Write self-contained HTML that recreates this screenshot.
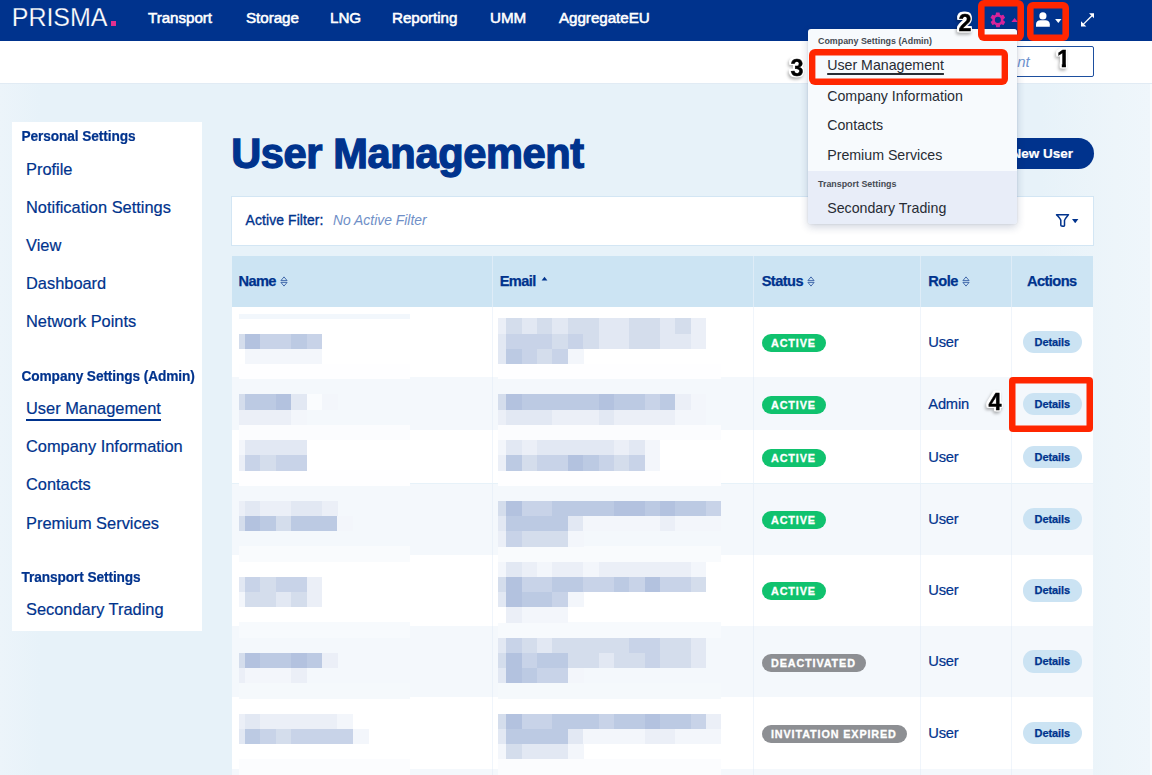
<!DOCTYPE html>
<html lang="en">
<head>
<meta charset="utf-8">
<title>PRISMA - User Management</title>
<style>
*{box-sizing:border-box;margin:0;padding:0}
html,body{width:1152px;height:775px;overflow:hidden}
body{font-family:"Liberation Sans",Arial,sans-serif;color:#00338d;background:#e8f2f9;position:relative}
.bg{position:absolute;left:0;top:83px;width:1152px;height:692px;background:linear-gradient(90deg,#ecf4fa 0,#e7f2f9 40px,#e7f2f9 1040px,#edf5fa 1115px,#eff6fb 1150.5px,#f8fbfd 1150.5px)}
/* ---------- top navigation ---------- */
.nav{position:absolute;left:0;top:0;width:1152px;height:41.6px;background:#00338d;color:#fff}
.logo{position:absolute;left:11.800px;top:2.3px;font-size:25px;line-height:30px;letter-spacing:-.05px;color:#fff;-webkit-text-stroke:.25px #00338d}
.logo-dot{position:absolute;left:110.5px;top:20.7px;width:5.8px;height:5.4px;background:#e2318f}
.nav a{position:absolute;top:9.3px;font-size:15.2px;line-height:18px;font-weight:normal;color:#fff;text-decoration:none;white-space:nowrap;letter-spacing:-.05px;-webkit-text-stroke:.55px #fff}
.ico{position:absolute}
/* ---------- sub bar ---------- */
.subbar{position:absolute;left:0;top:41px;width:1152px;height:43.2px;background:#fff;border-bottom:1px solid #e1ebf4}
.acct{position:absolute;left:960px;top:45.5px;width:134px;height:31.5px;border:1.2px solid #1d4f9f;border-radius:2px;background:#fff}
.acct i{position:absolute;left:56.2px;top:6px;font-size:15px;line-height:18px;color:#6f93cf}
/* ---------- side bar ---------- */
.side{position:absolute;left:12px;top:122px;width:190px;height:509px;background:#fff}
.side h4{position:absolute;left:9.5px;margin-top:.6px;font-size:13.7px;transform:scale(1,1.11);transform-origin:0 50%;-webkit-text-stroke:.2px #00338d;line-height:16px;font-weight:bold;color:#00338d;white-space:nowrap;letter-spacing:-.1px}
.side a{position:absolute;left:14px;-webkit-text-stroke:.2px #00338d;font-size:16.4px;line-height:20px;color:#00338d;text-decoration:none;white-space:nowrap}
.side a.on{border-bottom:2px solid #00338d;padding-bottom:1px}
/* ---------- main ---------- */
h1{position:absolute;left:231.2px;top:128.9px;font-size:41.6px;line-height:50px;font-weight:bold;color:#00338d;white-space:nowrap;letter-spacing:-.38px;-webkit-text-stroke:1.3px #00338d}
.newuser{position:absolute;left:968px;top:137.5px;width:126px;height:31px;border-radius:16px;background:#00338d;color:#fff;font-size:13.5px;font-weight:bold;line-height:31px;-webkit-text-stroke:.2px #fff;text-align:right;padding-right:21px;white-space:nowrap}
.filter{position:absolute;left:231px;top:196px;width:863px;height:50px;background:#fff;border:1px solid #d3e6f4}
.filter b{position:absolute;left:13.5px;top:15.4px;font-size:13.9px;line-height:16px;font-weight:normal;color:#00338d;white-space:nowrap;letter-spacing:.12px;-webkit-text-stroke:.35px #00338d}
.filter i{position:absolute;left:101px;top:15.4px;font-size:13.9px;line-height:16px;color:#6f8fc7;white-space:nowrap}
/* table */
.thead{position:absolute;left:232px;top:256px;width:861px;height:50.6px;background:#cce4f3}
.th{position:absolute;top:0;height:100%;border-left:1.3px solid #deecf7;font-size:14.6px;font-weight:bold;line-height:51.2px;color:#00338d;padding-left:8px;white-space:nowrap;letter-spacing:-.55px;-webkit-text-stroke:.25px #00338d}
.th:first-child{border-left:0}
.sort{display:inline-block;vertical-align:middle;margin-left:4px;margin-top:-2px}
.row{position:absolute;left:232px;width:861px;background:#fff}
.row.alt{background:#f4f8fc}
.cell{position:absolute;top:0;height:100%;border-left:1.3px solid #f0f5fb}
.row.alt .cell{border-left-color:#eaf1f9}
.cell:first-child{border-left:0}
.c-name{left:0;width:259.7px}.c-email{left:259.7px;width:261.7px}.c-status{left:521.4px;width:166.9px}.c-role{left:688.3px;width:90.7px}.c-act{left:779px;width:82px}
.c-role span{position:absolute;left:7px;top:50%;margin-top:-10.1px;font-size:14.7px;letter-spacing:-.2px;line-height:20px;color:#00338d;-webkit-text-stroke:.2px #00338d}
.badge{position:absolute;left:7.2px;top:50%;margin-top:-8px;height:18px;border-radius:9px;padding:0 10.1px 0 9.4px;font-size:10.8px;line-height:18.5px;font-weight:bold;letter-spacing:.88px;color:#fff;white-space:nowrap;-webkit-text-stroke:.3px #fff}
.badge.green{background:#10c26e}
.badge.grey{background:#8d8f93}
.details{position:absolute;left:10.8px;top:50%;margin-top:-11.2px;width:59px;height:22.5px;border-radius:11px;background:#cbe3f3;color:#00338d;font-size:11px;letter-spacing:-.1px;line-height:22px;font-weight:bold;text-align:center;-webkit-text-stroke:.25px #00338d}
.mosaic{position:absolute;left:0;top:0;pointer-events:none}
/* ---------- dropdown ---------- */
.tab{position:absolute;left:985px;top:28.5px;width:32px;height:14px;background:#f7fafd;border-radius:4px 4px 0 0}
.dd{position:absolute;left:808px;top:29px;width:209px;height:195px;background:#f7fafd;border-radius:3px;box-shadow:0 3px 9px rgba(20,40,90,.2),0 0 2px rgba(20,40,90,.12);overflow:hidden}
.dd .sec2{position:absolute;left:0;top:142px;width:209px;height:54px;background:#e8edf8}
.dd h5{position:absolute;left:10px;font-size:8.9px;line-height:10px;font-weight:bold;color:#454a52;white-space:nowrap;margin-top:.5px}
.dd a{position:absolute;left:19.2px;font-size:14.2px;line-height:18px;color:#272c34;text-decoration:none;white-space:nowrap}
.dd a.on{text-decoration:underline;text-decoration-thickness:1.8px;text-underline-offset:2.8px}
/* ---------- annotations ---------- */
.red{position:absolute;box-shadow:inset 0 0 0 6.6px #ff2600;border-radius:6px}
.num{position:absolute;font-size:23.4px;line-height:26px;font-weight:bold;color:#000;-webkit-text-stroke:.4px #000;filter:drop-shadow(1.3px 0 0 #fff) drop-shadow(-1.3px 0 0 #fff) drop-shadow(0 1.3px 0 #fff) drop-shadow(0 -1.3px 0 #fff) drop-shadow(-.5px 2px 1.5px rgba(0,0,0,.3))}
.num .one{display:inline-block;clip-path:polygon(0 0,100% 0,100% 17.7px,9.05px 17.7px,9.05px 100%,4.950px 100%,4.950px 17.7px,0 17.7px)}
</style>
</head>
<body>
<div class="bg"></div>

<!-- top navigation -->
<div class="nav">
  <div class="logo">PRISMA</div><div class="logo-dot"></div>
  <a style="left:148px">Transport</a>
  <a style="left:246px">Storage</a>
  <a style="left:330px">LNG</a>
  <a style="left:392px">Reporting</a>
  <a style="left:490px">UMM</a>
  <a style="left:559px">AggregateEU</a>
  <!-- gear -->
  <svg class="ico" style="left:989.3px;top:10.800px" width="17.750" height="17.750" viewBox="0 0 24 24"><path fill="#d6249a" d="M19.4 13a7.6 7.6 0 0 0 0-2l2.1-1.6a.5.5 0 0 0 .1-.7l-2-3.4a.5.5 0 0 0-.6-.2l-2.5 1a7.300 7.300 0 0 0-1.700-1l-.4-2.600a.5.5 0 0 0-.5-.4h-4a.5.5 0 0 0-.5.4l-.4 2.600a7.300 7.300 0 0 0-1.700 1l-2.500-1a.5.5 0 0 0-.6.200l-2 3.400a.5.5 0 0 0 .1.700L4.600 11a7.600 7.600 0 0 0 0 2l-2.100 1.600a.5.500 0 0 0-.1.700l2 3.400c.1.200.4.300.6.200l2.500-1c.5.400 1.100.700 1.700 1l.4 2.600c0 .200.200.400.500.400h4c.2 0 .500-.200.500-.400l.4-2.600a7.300 7.300 0 0 0 1.700-1l2.500 1c.2.100.500 0 .6-.200l2-3.400a.5.5 0 0 0-.1-.700L19.400 13zM12 16.100a4.100 4.100 0 1 1 0-8.200 4.100 4.100 0 0 1 0 8.200z"/></svg>
  <svg class="ico" style="left:1010.700px;top:18.300px" width="7.200" height="4.100" viewBox="0 0 8 5"><path fill="#d6249a" d="M0 5h8L4 0z"/></svg>
  <!-- user -->
  <svg class="ico" style="left:1036px;top:12.3px" width="13.800" height="14.800" viewBox="0 0 15 16"><circle cx="7.500" cy="4.200" r="3.900" fill="#fff"/><path fill="#fff" d="M0 16v-2.600C0 10.600 2.200 9 4.600 9h5.800c2.400 0 4.600 1.600 4.600 4.400V16z"/></svg>
  <svg class="ico" style="left:1055px;top:18.7px" width="6.600" height="4" viewBox="0 0 8 5"><path fill="#fff" d="M0 0h8L4 5z"/></svg>
  <!-- expand -->
  <svg class="ico" style="left:1081px;top:13.300px" width="13.400" height="13.800" viewBox="0 0 15 15"><path fill="#fff" d="M9 0h6v6zM6 15H0V9z"/><path stroke="#fff" stroke-width="1.500" d="M2.500 12.500L12.500 2.500"/></svg>
</div>

<!-- sub bar -->
<div class="subbar"></div>
<div class="acct"><i>nt</i></div>

<!-- side bar -->
<div class="side">
  <h4 style="top:6px">Personal Settings</h4>
  <a style="top:37px">Profile</a>
  <a style="top:75px">Notification Settings</a>
  <a style="top:113px">View</a>
  <a style="top:151px">Dashboard</a>
  <a style="top:189px">Network Points</a>
  <h4 style="top:246px">Company Settings (Admin)</h4>
  <a class="on" style="top:276px">User Management</a>
  <a style="top:314px">Company Information</a>
  <a style="top:352px">Contacts</a>
  <a style="top:391px">Premium Services</a>
  <h4 style="top:447px">Transport Settings</h4>
  <a style="top:477px">Secondary Trading</a>
</div>

<!-- main -->
<h1>User Management</h1>
<div class="newuser">New User</div>
<div class="filter"><b>Active Filter:</b><i>No Active Filter</i>
  <svg class="ico" style="left:822.5px;top:16.300px" width="15" height="15" viewBox="0 0 15 15"><path fill="none" stroke="#00338d" stroke-width="1.500" stroke-linejoin="round" d="M1.500 1.700h12c-.9 1.400-3.700 4-4 5.600v5.300c0 1.200-3.700.8-3.700-.4V7.300c-.3-1.600-3.100-4.200-4.300-5.600z"/></svg>
  <svg class="ico" style="left:840.300px;top:21.800px" width="6.400" height="4.300" viewBox="0 0 6 4"><path fill="#00338d" d="M0 0h6L3 4z"/></svg>
</div>

<div class="thead">
  <div class="th c-name" style="padding-left:6.4px">Name<svg class="sort" width="8" height="11" viewBox="0 0 8 11"><path fill="none" stroke="#2d56a0" stroke-width=".85" stroke-linejoin="round" d="M.9 4.600L4 .900l3.100 3.700zM.9 6.400L4 10.100l3.100-3.700z"/></svg></div>
  <div class="th c-email" style="padding-left:7px">Email<svg class="sort" width="7" height="9" viewBox="0 0 7 9" style="margin-left:5px;margin-top:-6px"><path fill="#00338d" d="M.6 5.400L3.500 1.800 6.400 5.400z"/></svg></div>
  <div class="th c-status" style="padding-left:7.3px">Status<svg class="sort" width="8" height="11" viewBox="0 0 8 11"><path fill="none" stroke="#2d56a0" stroke-width=".85" stroke-linejoin="round" d="M.9 4.600L4 .900l3.100 3.700zM.9 6.400L4 10.100l3.100-3.700z"/></svg></div>
  <div class="th c-role" style="padding-left:7px">Role<svg class="sort" width="8" height="11" viewBox="0 0 8 11"><path fill="none" stroke="#2d56a0" stroke-width=".85" stroke-linejoin="round" d="M.9 4.600L4 .900l3.100 3.700zM.9 6.400L4 10.100l3.100-3.700z"/></svg></div>
  <div class="th c-act" style="padding-left:0;padding-right:1.5px;text-align:center">Actions</div>
</div>
<div class="row" style="top:306.6px;height:70.8px"><div class="cell c-name"></div><div class="cell c-email"></div><div class="cell c-status"><span class="badge green">ACTIVE</span></div><div class="cell c-role"><span>User</span></div><div class="cell c-act"><span class="details">Details</span></div></div>
<div class="row alt" style="top:377.4px;height:52.9px"><div class="cell c-name"></div><div class="cell c-email"></div><div class="cell c-status"><span class="badge green">ACTIVE</span></div><div class="cell c-role"><span>Admin</span></div><div class="cell c-act"><span class="details">Details</span></div></div>
<div class="row" style="top:430.3px;height:53.2px"><div class="cell c-name"></div><div class="cell c-email"></div><div class="cell c-status"><span class="badge green">ACTIVE</span></div><div class="cell c-role"><span>User</span></div><div class="cell c-act"><span class="details">Details</span></div></div>
<div class="row alt" style="top:483.5px;height:71px"><div class="cell c-name"></div><div class="cell c-email"></div><div class="cell c-status"><span class="badge green">ACTIVE</span></div><div class="cell c-role"><span>User</span></div><div class="cell c-act"><span class="details">Details</span></div></div>
<div class="row" style="top:554.5px;height:71.5px"><div class="cell c-name"></div><div class="cell c-email"></div><div class="cell c-status"><span class="badge green">ACTIVE</span></div><div class="cell c-role"><span>User</span></div><div class="cell c-act"><span class="details">Details</span></div></div>
<div class="row alt" style="top:626px;height:71px"><div class="cell c-name"></div><div class="cell c-email"></div><div class="cell c-status"><span class="badge grey">DEACTIVATED</span></div><div class="cell c-role"><span>User</span></div><div class="cell c-act"><span class="details">Details</span></div></div>
<div class="row" style="top:697px;height:71.5px"><div class="cell c-name"></div><div class="cell c-email"></div><div class="cell c-status"><span class="badge grey">INVITATION EXPIRED</span></div><div class="cell c-role"><span>User</span></div><div class="cell c-act"><span class="details">Details</span></div></div>
<div class="row alt" style="top:768.5px;height:40px"><div class="cell c-name"></div><div class="cell c-email"></div><div class="cell c-status"></div><div class="cell c-role"></div><div class="cell c-act"></div></div>

<svg class="mosaic" width="1152" height="775" viewBox="0 0 1152 775" shape-rendering="crispEdges">
<rect x="239.3" y="363.9" width="170.7" height="15.5" fill="#fefeff"/>
<rect x="498.3" y="363.9" width="222.5" height="15.5" fill="#fefeff"/>
<rect x="239.3" y="424.7" width="170.7" height="15.5" fill="#fbfcfe"/>
<rect x="498.3" y="424.7" width="222.5" height="15.5" fill="#fbfcfe"/>
<rect x="239.3" y="470.3" width="170.7" height="15.5" fill="#fefeff"/>
<rect x="498.3" y="470.3" width="222.5" height="15.5" fill="#fefeff"/>
<rect x="239.3" y="546.3" width="170.7" height="15.5" fill="#f9fbfd"/>
<rect x="498.3" y="546.3" width="222.5" height="15.5" fill="#f9fbfd"/>
<rect x="239.3" y="622.3" width="170.7" height="15.5" fill="#f7fafd"/>
<rect x="498.3" y="622.3" width="222.5" height="15.5" fill="#f7fafd"/>
<rect x="239.3" y="683.1" width="170.7" height="15.5" fill="#f5f9fc"/>
<rect x="498.3" y="683.1" width="222.5" height="15.5" fill="#f5f9fc"/>
<rect x="239.3" y="759.1" width="170.7" height="15.5" fill="#fbfcfe"/>
<rect x="498.3" y="759.1" width="222.5" height="15.5" fill="#fbfcfe"/>
<rect x="239.3" y="314.2" width="170.7" height="4.3" fill="#f2f7fc"/>
<rect x="239.3" y="333.5" width="6.0" height="15.5" fill="#d4ddec"/>
<rect x="245.0" y="333.5" width="15.7" height="15.5" fill="#b3c2df"/>
<rect x="260.4" y="333.5" width="15.7" height="15.5" fill="#c8d3e8"/>
<rect x="275.8" y="333.5" width="15.7" height="15.5" fill="#c8d3e8"/>
<rect x="291.2" y="333.5" width="15.7" height="15.5" fill="#bccae3"/>
<rect x="306.6" y="333.5" width="15.7" height="15.5" fill="#c8d3e8"/>
<rect x="239.3" y="348.7" width="6.0" height="15.5" fill="#ffffff"/>
<rect x="245.0" y="348.7" width="15.7" height="15.5" fill="#f3f6fb"/>
<rect x="260.4" y="348.7" width="15.7" height="15.5" fill="#f3f6fb"/>
<rect x="275.8" y="348.7" width="15.7" height="15.5" fill="#f3f6fb"/>
<rect x="291.2" y="348.7" width="15.7" height="15.5" fill="#f3f6fb"/>
<rect x="306.6" y="348.7" width="15.7" height="15.5" fill="#f3f6fb"/>
<rect x="239.3" y="394.3" width="6.0" height="15.5" fill="#d4ddec"/>
<rect x="245.0" y="394.3" width="15.7" height="15.5" fill="#bccae3"/>
<rect x="260.4" y="394.3" width="15.7" height="15.5" fill="#bccae3"/>
<rect x="275.8" y="394.3" width="15.7" height="15.5" fill="#b3c2df"/>
<rect x="291.2" y="394.3" width="15.7" height="15.5" fill="#e2e8f3"/>
<rect x="306.6" y="394.3" width="15.7" height="15.5" fill="#fafcfe"/>
<rect x="322.0" y="394.3" width="15.7" height="15.5" fill="#f3f6fb"/>
<rect x="239.3" y="409.5" width="6.0" height="15.5" fill="#ebeff7"/>
<rect x="245.0" y="409.5" width="15.7" height="15.5" fill="#ebeff7"/>
<rect x="260.4" y="409.5" width="15.7" height="15.5" fill="#ebeff7"/>
<rect x="275.8" y="409.5" width="15.7" height="15.5" fill="#ebeff7"/>
<rect x="291.2" y="409.5" width="15.7" height="15.5" fill="#f3f6fb"/>
<rect x="239.3" y="439.9" width="6.0" height="15.5" fill="#f3f6fb"/>
<rect x="245.0" y="439.9" width="15.7" height="15.5" fill="#e2e8f3"/>
<rect x="260.4" y="439.9" width="15.7" height="15.5" fill="#e2e8f3"/>
<rect x="275.8" y="439.9" width="15.7" height="15.5" fill="#e2e8f3"/>
<rect x="291.2" y="439.9" width="15.7" height="15.5" fill="#e2e8f3"/>
<rect x="239.3" y="455.1" width="6.0" height="15.5" fill="#ebeff7"/>
<rect x="245.0" y="455.1" width="15.7" height="15.5" fill="#c8d3e8"/>
<rect x="260.4" y="455.1" width="15.7" height="15.5" fill="#d4ddec"/>
<rect x="275.8" y="455.1" width="15.7" height="15.5" fill="#c8d3e8"/>
<rect x="291.2" y="455.1" width="15.7" height="15.5" fill="#c8d3e8"/>
<rect x="239.3" y="500.7" width="6.0" height="15.5" fill="#ebeff7"/>
<rect x="245.0" y="500.7" width="15.7" height="15.5" fill="#e2e8f3"/>
<rect x="260.4" y="500.7" width="15.7" height="15.5" fill="#ebeff7"/>
<rect x="275.8" y="500.7" width="15.7" height="15.5" fill="#ebeff7"/>
<rect x="291.2" y="500.7" width="15.7" height="15.5" fill="#e2e8f3"/>
<rect x="306.6" y="500.7" width="15.7" height="15.5" fill="#e2e8f3"/>
<rect x="322.0" y="500.7" width="15.7" height="15.5" fill="#ebeff7"/>
<rect x="239.3" y="515.9" width="6.0" height="15.5" fill="#d4ddec"/>
<rect x="245.0" y="515.9" width="15.7" height="15.5" fill="#b3c2df"/>
<rect x="260.4" y="515.9" width="15.7" height="15.5" fill="#bccae3"/>
<rect x="275.8" y="515.9" width="15.7" height="15.5" fill="#d4ddec"/>
<rect x="291.2" y="515.9" width="15.7" height="15.5" fill="#bccae3"/>
<rect x="306.6" y="515.9" width="15.7" height="15.5" fill="#bccae3"/>
<rect x="322.0" y="515.9" width="15.7" height="15.5" fill="#bccae3"/>
<rect x="337.4" y="515.9" width="15.7" height="15.5" fill="#f3f6fb"/>
<rect x="239.3" y="576.7" width="6.0" height="15.5" fill="#e2e8f3"/>
<rect x="245.0" y="576.7" width="15.7" height="15.5" fill="#c8d3e8"/>
<rect x="260.4" y="576.7" width="15.7" height="15.5" fill="#d4ddec"/>
<rect x="275.8" y="576.7" width="15.7" height="15.5" fill="#c8d3e8"/>
<rect x="291.2" y="576.7" width="15.7" height="15.5" fill="#c8d3e8"/>
<rect x="306.6" y="576.7" width="15.7" height="15.5" fill="#ebeff7"/>
<rect x="239.3" y="591.9" width="6.0" height="15.5" fill="#f3f6fb"/>
<rect x="245.0" y="591.9" width="15.7" height="15.5" fill="#d4ddec"/>
<rect x="260.4" y="591.9" width="15.7" height="15.5" fill="#d4ddec"/>
<rect x="275.8" y="591.9" width="15.7" height="15.5" fill="#e2e8f3"/>
<rect x="291.2" y="591.9" width="15.7" height="15.5" fill="#d4ddec"/>
<rect x="306.6" y="591.9" width="15.7" height="15.5" fill="#ebeff7"/>
<rect x="239.3" y="652.7" width="6.0" height="15.5" fill="#d4ddec"/>
<rect x="245.0" y="652.7" width="15.7" height="15.5" fill="#b3c2df"/>
<rect x="260.4" y="652.7" width="15.7" height="15.5" fill="#bccae3"/>
<rect x="275.8" y="652.7" width="15.7" height="15.5" fill="#bccae3"/>
<rect x="291.2" y="652.7" width="15.7" height="15.5" fill="#b3c2df"/>
<rect x="306.6" y="652.7" width="15.7" height="15.5" fill="#bccae3"/>
<rect x="322.0" y="652.7" width="15.7" height="15.5" fill="#ebeff7"/>
<rect x="239.3" y="667.9" width="6.0" height="15.5" fill="#ebeff7"/>
<rect x="245.0" y="667.9" width="15.7" height="15.5" fill="#f3f6fb"/>
<rect x="260.4" y="667.9" width="15.7" height="15.5" fill="#f3f6fb"/>
<rect x="275.8" y="667.9" width="15.7" height="15.5" fill="#f3f6fb"/>
<rect x="291.2" y="667.9" width="15.7" height="15.5" fill="#ebeff7"/>
<rect x="239.3" y="713.5" width="6.0" height="15.5" fill="#ebeff7"/>
<rect x="245.0" y="713.5" width="15.7" height="15.5" fill="#e2e8f3"/>
<rect x="260.4" y="713.5" width="15.7" height="15.5" fill="#ebeff7"/>
<rect x="275.8" y="713.5" width="15.7" height="15.5" fill="#ebeff7"/>
<rect x="291.2" y="713.5" width="15.7" height="15.5" fill="#ebeff7"/>
<rect x="306.6" y="713.5" width="15.7" height="15.5" fill="#ebeff7"/>
<rect x="322.0" y="713.5" width="15.7" height="15.5" fill="#ebeff7"/>
<rect x="337.4" y="713.5" width="15.7" height="15.5" fill="#f3f6fb"/>
<rect x="239.3" y="728.7" width="6.0" height="15.5" fill="#e2e8f3"/>
<rect x="245.0" y="728.7" width="15.7" height="15.5" fill="#bccae3"/>
<rect x="260.4" y="728.7" width="15.7" height="15.5" fill="#c8d3e8"/>
<rect x="275.8" y="728.7" width="15.7" height="15.5" fill="#d4ddec"/>
<rect x="291.2" y="728.7" width="15.7" height="15.5" fill="#c8d3e8"/>
<rect x="306.6" y="728.7" width="15.7" height="15.5" fill="#c8d3e8"/>
<rect x="322.0" y="728.7" width="15.7" height="15.5" fill="#c8d3e8"/>
<rect x="337.4" y="728.7" width="15.7" height="15.5" fill="#c8d3e8"/>
<rect x="352.8" y="728.7" width="15.7" height="15.5" fill="#f3f6fb"/>
<rect x="498.3" y="318.3" width="8.3" height="15.5" fill="#ebeff7"/>
<rect x="506.3" y="318.3" width="15.7" height="15.5" fill="#d4ddec"/>
<rect x="521.7" y="318.3" width="15.7" height="15.5" fill="#e2e8f3"/>
<rect x="537.0" y="318.3" width="15.7" height="15.5" fill="#d4ddec"/>
<rect x="552.4" y="318.3" width="15.7" height="15.5" fill="#e2e8f3"/>
<rect x="567.8" y="318.3" width="15.7" height="15.5" fill="#d4ddec"/>
<rect x="583.1" y="318.3" width="15.7" height="15.5" fill="#d4ddec"/>
<rect x="598.5" y="318.3" width="15.7" height="15.5" fill="#e2e8f3"/>
<rect x="613.9" y="318.3" width="15.7" height="15.5" fill="#e2e8f3"/>
<rect x="629.3" y="318.3" width="15.7" height="15.5" fill="#d4ddec"/>
<rect x="644.6" y="318.3" width="15.7" height="15.5" fill="#d4ddec"/>
<rect x="660.0" y="318.3" width="15.7" height="15.5" fill="#e2e8f3"/>
<rect x="675.4" y="318.3" width="15.7" height="15.5" fill="#d4ddec"/>
<rect x="690.7" y="318.3" width="15.7" height="15.5" fill="#ebeff7"/>
<rect x="498.3" y="333.5" width="8.3" height="15.5" fill="#e2e8f3"/>
<rect x="506.3" y="333.5" width="15.7" height="15.5" fill="#c8d3e8"/>
<rect x="521.7" y="333.5" width="15.7" height="15.5" fill="#c8d3e8"/>
<rect x="537.0" y="333.5" width="15.7" height="15.5" fill="#c8d3e8"/>
<rect x="552.4" y="333.5" width="15.7" height="15.5" fill="#d4ddec"/>
<rect x="567.8" y="333.5" width="15.7" height="15.5" fill="#c8d3e8"/>
<rect x="583.1" y="333.5" width="15.7" height="15.5" fill="#d4ddec"/>
<rect x="598.5" y="333.5" width="15.7" height="15.5" fill="#e2e8f3"/>
<rect x="613.9" y="333.5" width="15.7" height="15.5" fill="#e2e8f3"/>
<rect x="629.3" y="333.5" width="15.7" height="15.5" fill="#d4ddec"/>
<rect x="644.6" y="333.5" width="15.7" height="15.5" fill="#d4ddec"/>
<rect x="660.0" y="333.5" width="15.7" height="15.5" fill="#e2e8f3"/>
<rect x="675.4" y="333.5" width="15.7" height="15.5" fill="#e2e8f3"/>
<rect x="690.7" y="333.5" width="15.7" height="15.5" fill="#ebeff7"/>
<rect x="498.3" y="348.7" width="8.3" height="15.5" fill="#e2e8f3"/>
<rect x="506.3" y="348.7" width="15.7" height="15.5" fill="#bccae3"/>
<rect x="521.7" y="348.7" width="15.7" height="15.5" fill="#c8d3e8"/>
<rect x="537.0" y="348.7" width="15.7" height="15.5" fill="#d4ddec"/>
<rect x="552.4" y="348.7" width="15.7" height="15.5" fill="#c8d3e8"/>
<rect x="567.8" y="348.7" width="15.7" height="15.5" fill="#f3f6fb"/>
<rect x="498.3" y="394.3" width="8.3" height="15.5" fill="#d4ddec"/>
<rect x="506.3" y="394.3" width="15.7" height="15.5" fill="#b3c2df"/>
<rect x="521.7" y="394.3" width="15.7" height="15.5" fill="#bccae3"/>
<rect x="537.0" y="394.3" width="15.7" height="15.5" fill="#bccae3"/>
<rect x="552.4" y="394.3" width="15.7" height="15.5" fill="#bccae3"/>
<rect x="567.8" y="394.3" width="15.7" height="15.5" fill="#bccae3"/>
<rect x="583.1" y="394.3" width="15.7" height="15.5" fill="#bccae3"/>
<rect x="598.5" y="394.3" width="15.7" height="15.5" fill="#b3c2df"/>
<rect x="613.9" y="394.3" width="15.7" height="15.5" fill="#bccae3"/>
<rect x="629.3" y="394.3" width="15.7" height="15.5" fill="#bccae3"/>
<rect x="644.6" y="394.3" width="15.7" height="15.5" fill="#c8d3e8"/>
<rect x="660.0" y="394.3" width="15.7" height="15.5" fill="#bccae3"/>
<rect x="675.4" y="394.3" width="15.7" height="15.5" fill="#ebeff7"/>
<rect x="690.7" y="394.3" width="15.7" height="15.5" fill="#f3f6fb"/>
<rect x="498.3" y="409.5" width="8.3" height="15.5" fill="#ebeff7"/>
<rect x="506.3" y="409.5" width="15.7" height="15.5" fill="#e2e8f3"/>
<rect x="521.7" y="409.5" width="15.7" height="15.5" fill="#e2e8f3"/>
<rect x="537.0" y="409.5" width="15.7" height="15.5" fill="#e2e8f3"/>
<rect x="552.4" y="409.5" width="15.7" height="15.5" fill="#ebeff7"/>
<rect x="567.8" y="409.5" width="15.7" height="15.5" fill="#ebeff7"/>
<rect x="583.1" y="409.5" width="15.7" height="15.5" fill="#ebeff7"/>
<rect x="598.5" y="409.5" width="15.7" height="15.5" fill="#e2e8f3"/>
<rect x="613.9" y="409.5" width="15.7" height="15.5" fill="#ebeff7"/>
<rect x="629.3" y="409.5" width="15.7" height="15.5" fill="#ebeff7"/>
<rect x="644.6" y="409.5" width="15.7" height="15.5" fill="#ebeff7"/>
<rect x="660.0" y="409.5" width="15.7" height="15.5" fill="#ebeff7"/>
<rect x="675.4" y="409.5" width="15.7" height="15.5" fill="#f3f6fb"/>
<rect x="690.7" y="409.5" width="15.7" height="15.5" fill="#f3f6fb"/>
<rect x="498.3" y="439.9" width="8.3" height="15.5" fill="#f3f6fb"/>
<rect x="506.3" y="439.9" width="15.7" height="15.5" fill="#e2e8f3"/>
<rect x="521.7" y="439.9" width="15.7" height="15.5" fill="#ebeff7"/>
<rect x="537.0" y="439.9" width="15.7" height="15.5" fill="#e2e8f3"/>
<rect x="552.4" y="439.9" width="15.7" height="15.5" fill="#e2e8f3"/>
<rect x="567.8" y="439.9" width="15.7" height="15.5" fill="#e2e8f3"/>
<rect x="583.1" y="439.9" width="15.7" height="15.5" fill="#e2e8f3"/>
<rect x="598.5" y="439.9" width="15.7" height="15.5" fill="#e2e8f3"/>
<rect x="613.9" y="439.9" width="15.7" height="15.5" fill="#ebeff7"/>
<rect x="629.3" y="439.9" width="15.7" height="15.5" fill="#e2e8f3"/>
<rect x="644.6" y="439.9" width="15.7" height="15.5" fill="#f3f6fb"/>
<rect x="498.3" y="455.1" width="8.3" height="15.5" fill="#ebeff7"/>
<rect x="506.3" y="455.1" width="15.7" height="15.5" fill="#bccae3"/>
<rect x="521.7" y="455.1" width="15.7" height="15.5" fill="#d4ddec"/>
<rect x="537.0" y="455.1" width="15.7" height="15.5" fill="#c8d3e8"/>
<rect x="552.4" y="455.1" width="15.7" height="15.5" fill="#c8d3e8"/>
<rect x="567.8" y="455.1" width="15.7" height="15.5" fill="#b3c2df"/>
<rect x="583.1" y="455.1" width="15.7" height="15.5" fill="#bccae3"/>
<rect x="598.5" y="455.1" width="15.7" height="15.5" fill="#c8d3e8"/>
<rect x="613.9" y="455.1" width="15.7" height="15.5" fill="#d4ddec"/>
<rect x="629.3" y="455.1" width="15.7" height="15.5" fill="#c8d3e8"/>
<rect x="644.6" y="455.1" width="15.7" height="15.5" fill="#f3f6fb"/>
<rect x="498.3" y="500.7" width="8.3" height="15.5" fill="#d4ddec"/>
<rect x="506.3" y="500.7" width="15.7" height="15.5" fill="#b3c2df"/>
<rect x="521.7" y="500.7" width="15.7" height="15.5" fill="#c8d3e8"/>
<rect x="537.0" y="500.7" width="15.7" height="15.5" fill="#c8d3e8"/>
<rect x="552.4" y="500.7" width="15.7" height="15.5" fill="#bccae3"/>
<rect x="567.8" y="500.7" width="15.7" height="15.5" fill="#bccae3"/>
<rect x="583.1" y="500.7" width="15.7" height="15.5" fill="#bccae3"/>
<rect x="598.5" y="500.7" width="15.7" height="15.5" fill="#bccae3"/>
<rect x="613.9" y="500.7" width="15.7" height="15.5" fill="#b3c2df"/>
<rect x="629.3" y="500.7" width="15.7" height="15.5" fill="#b3c2df"/>
<rect x="644.6" y="500.7" width="15.7" height="15.5" fill="#bccae3"/>
<rect x="660.0" y="500.7" width="15.7" height="15.5" fill="#b3c2df"/>
<rect x="675.4" y="500.7" width="15.7" height="15.5" fill="#bccae3"/>
<rect x="690.7" y="500.7" width="15.7" height="15.5" fill="#bccae3"/>
<rect x="706.1" y="500.7" width="15.2" height="15.5" fill="#c8d3e8"/>
<rect x="498.3" y="515.9" width="8.3" height="15.5" fill="#e2e8f3"/>
<rect x="506.3" y="515.9" width="15.7" height="15.5" fill="#bccae3"/>
<rect x="521.7" y="515.9" width="15.7" height="15.5" fill="#bccae3"/>
<rect x="537.0" y="515.9" width="15.7" height="15.5" fill="#bccae3"/>
<rect x="552.4" y="515.9" width="15.7" height="15.5" fill="#bccae3"/>
<rect x="567.8" y="515.9" width="15.7" height="15.5" fill="#e2e8f3"/>
<rect x="583.1" y="515.9" width="15.7" height="15.5" fill="#f3f6fb"/>
<rect x="598.5" y="515.9" width="15.7" height="15.5" fill="#f3f6fb"/>
<rect x="613.9" y="515.9" width="15.7" height="15.5" fill="#f3f6fb"/>
<rect x="629.3" y="515.9" width="15.7" height="15.5" fill="#f3f6fb"/>
<rect x="644.6" y="515.9" width="15.7" height="15.5" fill="#f3f6fb"/>
<rect x="660.0" y="515.9" width="15.7" height="15.5" fill="#ebeff7"/>
<rect x="675.4" y="515.9" width="15.7" height="15.5" fill="#f3f6fb"/>
<rect x="690.7" y="515.9" width="15.7" height="15.5" fill="#f3f6fb"/>
<rect x="706.1" y="515.9" width="15.2" height="15.5" fill="#f3f6fb"/>
<rect x="498.3" y="531.1" width="8.3" height="15.5" fill="#ebeff7"/>
<rect x="506.3" y="531.1" width="15.7" height="15.5" fill="#c8d3e8"/>
<rect x="521.7" y="531.1" width="15.7" height="15.5" fill="#d4ddec"/>
<rect x="537.0" y="531.1" width="15.7" height="15.5" fill="#d4ddec"/>
<rect x="552.4" y="531.1" width="15.7" height="15.5" fill="#d4ddec"/>
<rect x="567.8" y="531.1" width="15.7" height="15.5" fill="#f3f6fb"/>
<rect x="498.3" y="561.5" width="8.3" height="15.5" fill="#f3f6fb"/>
<rect x="506.3" y="561.5" width="15.7" height="15.5" fill="#e2e8f3"/>
<rect x="521.7" y="561.5" width="15.7" height="15.5" fill="#ebeff7"/>
<rect x="537.0" y="561.5" width="15.7" height="15.5" fill="#f3f6fb"/>
<rect x="552.4" y="561.5" width="15.7" height="15.5" fill="#ebeff7"/>
<rect x="567.8" y="561.5" width="15.7" height="15.5" fill="#ebeff7"/>
<rect x="583.1" y="561.5" width="15.7" height="15.5" fill="#f3f6fb"/>
<rect x="598.5" y="561.5" width="15.7" height="15.5" fill="#ebeff7"/>
<rect x="613.9" y="561.5" width="15.7" height="15.5" fill="#ebeff7"/>
<rect x="629.3" y="561.5" width="15.7" height="15.5" fill="#ebeff7"/>
<rect x="644.6" y="561.5" width="15.7" height="15.5" fill="#ebeff7"/>
<rect x="660.0" y="561.5" width="15.7" height="15.5" fill="#ebeff7"/>
<rect x="675.4" y="561.5" width="15.7" height="15.5" fill="#ebeff7"/>
<rect x="690.7" y="561.5" width="15.7" height="15.5" fill="#f3f6fb"/>
<rect x="498.3" y="576.7" width="8.3" height="15.5" fill="#d4ddec"/>
<rect x="506.3" y="576.7" width="15.7" height="15.5" fill="#b3c2df"/>
<rect x="521.7" y="576.7" width="15.7" height="15.5" fill="#c8d3e8"/>
<rect x="537.0" y="576.7" width="15.7" height="15.5" fill="#c8d3e8"/>
<rect x="552.4" y="576.7" width="15.7" height="15.5" fill="#bccae3"/>
<rect x="567.8" y="576.7" width="15.7" height="15.5" fill="#bccae3"/>
<rect x="583.1" y="576.7" width="15.7" height="15.5" fill="#c8d3e8"/>
<rect x="598.5" y="576.7" width="15.7" height="15.5" fill="#c8d3e8"/>
<rect x="613.9" y="576.7" width="15.7" height="15.5" fill="#bccae3"/>
<rect x="629.3" y="576.7" width="15.7" height="15.5" fill="#c8d3e8"/>
<rect x="644.6" y="576.7" width="15.7" height="15.5" fill="#b3c2df"/>
<rect x="660.0" y="576.7" width="15.7" height="15.5" fill="#c8d3e8"/>
<rect x="675.4" y="576.7" width="15.7" height="15.5" fill="#c8d3e8"/>
<rect x="690.7" y="576.7" width="15.7" height="15.5" fill="#d4ddec"/>
<rect x="498.3" y="591.9" width="8.3" height="15.5" fill="#e2e8f3"/>
<rect x="506.3" y="591.9" width="15.7" height="15.5" fill="#b3c2df"/>
<rect x="521.7" y="591.9" width="15.7" height="15.5" fill="#bccae3"/>
<rect x="537.0" y="591.9" width="15.7" height="15.5" fill="#bccae3"/>
<rect x="552.4" y="591.9" width="15.7" height="15.5" fill="#c8d3e8"/>
<rect x="567.8" y="591.9" width="15.7" height="15.5" fill="#f3f6fb"/>
<rect x="498.3" y="607.1" width="8.3" height="15.5" fill="#ffffff"/>
<rect x="506.3" y="607.1" width="15.7" height="15.5" fill="#ebeff7"/>
<rect x="521.7" y="607.1" width="15.7" height="15.5" fill="#f3f6fb"/>
<rect x="537.0" y="607.1" width="15.7" height="15.5" fill="#f3f6fb"/>
<rect x="552.4" y="607.1" width="15.7" height="15.5" fill="#f3f6fb"/>
<rect x="498.3" y="637.5" width="8.3" height="15.5" fill="#e2e8f3"/>
<rect x="506.3" y="637.5" width="15.7" height="15.5" fill="#c8d3e8"/>
<rect x="521.7" y="637.5" width="15.7" height="15.5" fill="#d4ddec"/>
<rect x="537.0" y="637.5" width="15.7" height="15.5" fill="#e2e8f3"/>
<rect x="552.4" y="637.5" width="15.7" height="15.5" fill="#d4ddec"/>
<rect x="567.8" y="637.5" width="15.7" height="15.5" fill="#d4ddec"/>
<rect x="583.1" y="637.5" width="15.7" height="15.5" fill="#d4ddec"/>
<rect x="598.5" y="637.5" width="15.7" height="15.5" fill="#d4ddec"/>
<rect x="613.9" y="637.5" width="15.7" height="15.5" fill="#d4ddec"/>
<rect x="629.3" y="637.5" width="15.7" height="15.5" fill="#c8d3e8"/>
<rect x="644.6" y="637.5" width="15.7" height="15.5" fill="#c8d3e8"/>
<rect x="660.0" y="637.5" width="15.7" height="15.5" fill="#d4ddec"/>
<rect x="675.4" y="637.5" width="15.7" height="15.5" fill="#d4ddec"/>
<rect x="690.7" y="637.5" width="15.7" height="15.5" fill="#e2e8f3"/>
<rect x="498.3" y="652.7" width="8.3" height="15.5" fill="#d4ddec"/>
<rect x="506.3" y="652.7" width="15.7" height="15.5" fill="#b3c2df"/>
<rect x="521.7" y="652.7" width="15.7" height="15.5" fill="#c8d3e8"/>
<rect x="537.0" y="652.7" width="15.7" height="15.5" fill="#bccae3"/>
<rect x="552.4" y="652.7" width="15.7" height="15.5" fill="#bccae3"/>
<rect x="567.8" y="652.7" width="15.7" height="15.5" fill="#d4ddec"/>
<rect x="583.1" y="652.7" width="15.7" height="15.5" fill="#d4ddec"/>
<rect x="598.5" y="652.7" width="15.7" height="15.5" fill="#e2e8f3"/>
<rect x="613.9" y="652.7" width="15.7" height="15.5" fill="#d4ddec"/>
<rect x="629.3" y="652.7" width="15.7" height="15.5" fill="#d4ddec"/>
<rect x="644.6" y="652.7" width="15.7" height="15.5" fill="#c8d3e8"/>
<rect x="660.0" y="652.7" width="15.7" height="15.5" fill="#d4ddec"/>
<rect x="675.4" y="652.7" width="15.7" height="15.5" fill="#d4ddec"/>
<rect x="690.7" y="652.7" width="15.7" height="15.5" fill="#e2e8f3"/>
<rect x="498.3" y="667.9" width="8.3" height="15.5" fill="#e2e8f3"/>
<rect x="506.3" y="667.9" width="15.7" height="15.5" fill="#b3c2df"/>
<rect x="521.7" y="667.9" width="15.7" height="15.5" fill="#bccae3"/>
<rect x="537.0" y="667.9" width="15.7" height="15.5" fill="#c8d3e8"/>
<rect x="552.4" y="667.9" width="15.7" height="15.5" fill="#c8d3e8"/>
<rect x="567.8" y="667.9" width="15.7" height="15.5" fill="#f3f6fb"/>
<rect x="498.3" y="713.5" width="8.3" height="15.5" fill="#d4ddec"/>
<rect x="506.3" y="713.5" width="15.7" height="15.5" fill="#b3c2df"/>
<rect x="521.7" y="713.5" width="15.7" height="15.5" fill="#c8d3e8"/>
<rect x="537.0" y="713.5" width="15.7" height="15.5" fill="#c8d3e8"/>
<rect x="552.4" y="713.5" width="15.7" height="15.5" fill="#bccae3"/>
<rect x="567.8" y="713.5" width="15.7" height="15.5" fill="#bccae3"/>
<rect x="583.1" y="713.5" width="15.7" height="15.5" fill="#bccae3"/>
<rect x="598.5" y="713.5" width="15.7" height="15.5" fill="#c8d3e8"/>
<rect x="613.9" y="713.5" width="15.7" height="15.5" fill="#bccae3"/>
<rect x="629.3" y="713.5" width="15.7" height="15.5" fill="#bccae3"/>
<rect x="644.6" y="713.5" width="15.7" height="15.5" fill="#b3c2df"/>
<rect x="660.0" y="713.5" width="15.7" height="15.5" fill="#bccae3"/>
<rect x="675.4" y="713.5" width="15.7" height="15.5" fill="#bccae3"/>
<rect x="690.7" y="713.5" width="15.7" height="15.5" fill="#c8d3e8"/>
<rect x="706.1" y="713.5" width="15.2" height="15.5" fill="#ebeff7"/>
<rect x="498.3" y="728.7" width="8.3" height="15.5" fill="#e2e8f3"/>
<rect x="506.3" y="728.7" width="15.7" height="15.5" fill="#bccae3"/>
<rect x="521.7" y="728.7" width="15.7" height="15.5" fill="#bccae3"/>
<rect x="537.0" y="728.7" width="15.7" height="15.5" fill="#bccae3"/>
<rect x="552.4" y="728.7" width="15.7" height="15.5" fill="#bccae3"/>
<rect x="567.8" y="728.7" width="15.7" height="15.5" fill="#e2e8f3"/>
<rect x="583.1" y="728.7" width="15.7" height="15.5" fill="#f3f6fb"/>
<rect x="598.5" y="728.7" width="15.7" height="15.5" fill="#f3f6fb"/>
<rect x="613.9" y="728.7" width="15.7" height="15.5" fill="#f3f6fb"/>
<rect x="629.3" y="728.7" width="15.7" height="15.5" fill="#f3f6fb"/>
<rect x="644.6" y="728.7" width="15.7" height="15.5" fill="#ebeff7"/>
<rect x="660.0" y="728.7" width="15.7" height="15.5" fill="#ebeff7"/>
<rect x="675.4" y="728.7" width="15.7" height="15.5" fill="#f3f6fb"/>
<rect x="690.7" y="728.7" width="15.7" height="15.5" fill="#f3f6fb"/>
<rect x="706.1" y="728.7" width="15.2" height="15.5" fill="#f3f6fb"/>
<rect x="498.3" y="743.9" width="8.3" height="15.5" fill="#f3f6fb"/>
<rect x="506.3" y="743.9" width="15.7" height="15.5" fill="#d4ddec"/>
<rect x="521.7" y="743.9" width="15.7" height="15.5" fill="#e2e8f3"/>
<rect x="537.0" y="743.9" width="15.7" height="15.5" fill="#e2e8f3"/>
<rect x="552.4" y="743.9" width="15.7" height="15.5" fill="#e2e8f3"/>
<rect x="567.8" y="743.9" width="15.7" height="15.5" fill="#f3f6fb"/>
</svg>

<!-- settings dropdown -->
<div class="tab"></div>
<div class="dd">
  <div class="sec2"></div>
  <h5 style="top:6px">Company Settings (Admin)</h5>
  <a class="on" style="top:27px">User Management</a>
  <a style="top:58px">Company Information</a>
  <a style="top:87px">Contacts</a>
  <a style="top:116.8px">Premium Services</a>
  <h5 style="top:149px">Transport Settings</h5>
  <a style="top:170px">Secondary Trading</a>
</div>

<!-- annotations -->
<div class="red" style="left:978.2px;top:-.5px;width:45.5px;height:41.2px"></div>
<div class="red" style="left:1026.8px;top:2.1px;width:42.4px;height:38.6px"></div>
<div class="red" style="left:808.9px;top:49.2px;width:198.7px;height:35.8px;box-shadow:inset 0 0 0 6.4px #ff2600"></div>
<div class="red" style="left:1008.6px;top:377.2px;width:84.1px;height:54.4px;border-radius:4px;box-shadow:inset 0 0 0 6.5px #ff2600"></div>
<div class="num" style="left:958.5px;top:9.800px">2</div>
<div class="num" style="left:1056.900px;top:46.300px"><span class="one">1</span></div>
<div class="num" style="left:790.5px;top:54.500px">3</div>
<div class="num" style="left:988.5px;top:389px">4</div>
</body>
</html>
